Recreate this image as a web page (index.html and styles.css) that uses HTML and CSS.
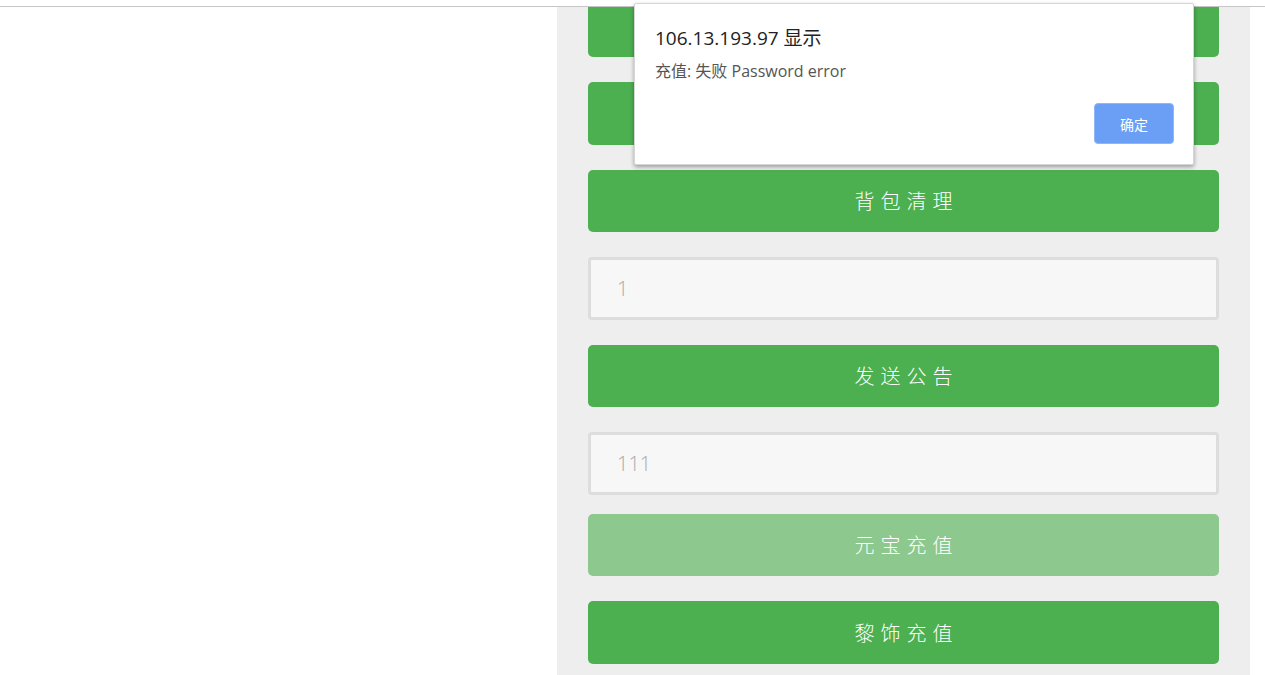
FILE: index.html
```html
<!DOCTYPE html>
<html lang="zh-CN">
<head>
  <meta charset="UTF-8">
  <title>GM 工具</title>
  <link rel="stylesheet" href="styles.css">
</head>
<body>
  <div class="topbar"></div>
  <div class="page">
    <div class="spacer"></div>
    <div class="panel">
      <div class="list">
        <button class="btn">物品发送</button>
        <button class="btn">邮件发送</button>
        <button class="btn">背包清理</button>
        <input class="field" type="text" value="1">
        <button class="btn">发送公告</button>
        <input class="field tight" type="text" value="111">
        <button class="btn disabled">元宝充值</button>
        <button class="btn">黎饰充值</button>
      </div>
    </div>
  </div>

  <div class="dialog">
    <div class="dialog-title">106.13.193.97 显示</div>
    <div class="dialog-msg">充值: 失败 Password error</div>
    <div class="dialog-actions">
      <button class="dialog-ok">确定</button>
    </div>
  </div>
</body>
</html>
```
FILE: styles.css
```css
body {
  margin: 0;
  background: #fff;
  font-family: "Open Sans", "Noto Sans CJK SC", sans-serif;
  overflow: hidden;
}

.topbar {
  height: 6px;
  border-bottom: 1px solid #c6c6c6;
  background: #fff;
}

.page {
  display: flex;
  height: 668px;
}

.spacer {
  width: 557px;
}

.panel {
  width: 693px;
  background: #eee;
  overflow: hidden;
  padding: 0 31px;
  box-sizing: border-box;
}

.list {
  display: flex;
  flex-direction: column;
  margin-top: -12.5px;
}

.btn {
  height: 62.5px;
  margin-bottom: 25px;
  border: none;
  border-radius: 5px;
  background: #4caf50;
  color: #fff;
  font-family: "Noto Sans CJK SC", sans-serif;
  font-weight: 300;
  font-size: 20px;
  letter-spacing: 6px;
  padding: 0 0 0 6px;
}

.btn.disabled {
  background: #8dc88f;
}

.field {
  height: 62.5px;
  margin-bottom: 25px;
  box-sizing: border-box;
  border: 3px solid #ddd;
  border-radius: 4px;
  background: #f7f7f7;
  color: #a9a9a9;
  font-family: "Open Sans", "Noto Sans CJK SC", sans-serif;
  font-weight: 300;
  font-size: 20px;
  padding: 0 26px;
}

.field.tight {
  margin-bottom: 19px;
}

.dialog {
  position: absolute;
  left: 634px;
  top: 3px;
  width: 560px;
  height: 162px;
  box-sizing: border-box;
  background: #fff;
  border: 1px solid #d6d6d6;
  border-radius: 2px;
  box-shadow: 0 2px 4px rgba(0,0,0,0.35);
  padding: 20px 19px 0 20px;
}

.dialog-title {
  font-size: 19px;
  color: #222;
  line-height: 28px;
}

.dialog-msg {
  font-size: 16px;
  color: #555;
  margin-top: 8px;
  line-height: 22px;
}

.dialog-actions {
  display: flex;
  justify-content: flex-end;
  margin-top: 21px;
}

.dialog-ok {
  width: 80px;
  height: 41px;
  border: 1px solid #8fb6f7;
  border-radius: 4px;
  background: #6a9ff5;
  color: #fff;
  font-family: "Noto Sans CJK SC", sans-serif;
  font-size: 14px;
}
```
